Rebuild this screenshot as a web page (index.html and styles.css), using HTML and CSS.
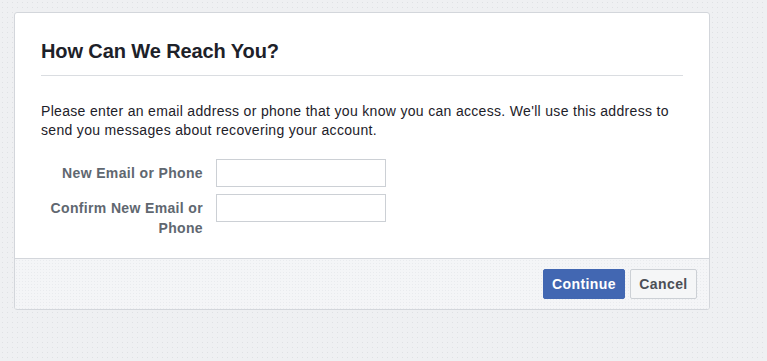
FILE: index.html
```html
<!DOCTYPE html>
<html lang="en">
<head>
<meta charset="utf-8">
<title>How Can We Reach You?</title>
<link rel="stylesheet" href="styles.css">
</head>
<body>
<div class="page">
  <div class="dialog">
    <div class="dialog-body">
      <h2 class="title">How Can We Reach You?</h2>
      <p class="intro">Please enter an email address or phone that you know you can access. We'll use this address to send you messages about recovering your account.</p>
      <div class="form">
        <div class="row">
          <label class="label" for="email1">New Email or Phone</label>
          <input class="field" id="email1" type="text">
        </div>
        <div class="row row-top">
          <label class="label" for="email2">Confirm New Email or Phone</label>
          <input class="field" id="email2" type="text">
        </div>
      </div>
    </div>
    <div class="dialog-footer">
      <button class="btn btn-primary" type="button">Continue</button>
      <button class="btn btn-secondary" type="button">Cancel</button>
    </div>
  </div>
</div>
</body>
</html>
```

FILE: styles.css
```css
html, body {
  margin: 0;
  padding: 0;
}

body {
  width: 767px;
  height: 361px;
  overflow: hidden;
  font-family: "Liberation Sans", Arial, sans-serif;
  color: #1d2129;
  background-color: #eff0f2;
  background-image: radial-gradient(circle, #dfe1e4 0.6px, transparent 1px);
  background-size: 5px 5px;
}

.page {
  padding: 12px 0 0 14px;
}

.dialog {
  width: 694px;
  background: #fff;
  border: 1px solid #d3d6db;
  border-radius: 3px;
  overflow: hidden;
}

.dialog-body {
  padding: 26px 26px 20px 26px;
}

.title {
  margin: 0;
  padding-bottom: 12px;
  border-bottom: 1px solid #dadde1;
  font-size: 20px;
  line-height: 24px;
  font-weight: bold;
  letter-spacing: -0.1px;
  color: #1d2129;
}

.intro {
  margin: 26px 0 19px 0;
  font-size: 14px;
  line-height: 19px;
  letter-spacing: 0.32px;
  color: #1d2129;
}

.form {
  display: flex;
  flex-direction: column;
  gap: 7px;
}

.row {
  display: flex;
  align-items: center;
  gap: 13px;
}

.row-top {
  align-items: flex-start;
}

.row-top .label {
  padding-top: 4px;
}

.label {
  width: 162px;
  flex: none;
  text-align: right;
  font-size: 14px;
  line-height: 20px;
  font-weight: bold;
  letter-spacing: 0.35px;
  color: #606770;
}

.field {
  box-sizing: border-box;
  width: 170px;
  height: 28px;
  margin: 0;
  padding: 3px 4px;
  border: 1px solid #ccd0d5;
  border-radius: 0;
  background: #fff;
  font-family: inherit;
  font-size: 14px;
}

.dialog-footer {
  display: flex;
  justify-content: flex-end;
  gap: 5px;
  padding: 10px 12px 10px 12px;
  border-top: 1px solid #d3d6db;
  background-color: #f4f5f7;
  background-image: radial-gradient(circle, #e9ebee 0.6px, transparent 1px);
  background-size: 3px 3px;
}

.btn {
  box-sizing: border-box;
  height: 30px;
  margin: 0;
  padding: 0;
  border-radius: 2px;
  font-family: inherit;
  font-size: 14px;
  font-weight: bold;
  letter-spacing: 0.4px;
  line-height: 27px;
  cursor: pointer;
}

.btn-primary {
  width: 82px;
  border: 1px solid #4267b2;
  background: #4267b2;
  color: #fff;
}

.btn-secondary {
  width: 67px;
  border: 1px solid #ccd0d5;
  background: #f5f6f7;
  color: #4b4f56;
}
```
